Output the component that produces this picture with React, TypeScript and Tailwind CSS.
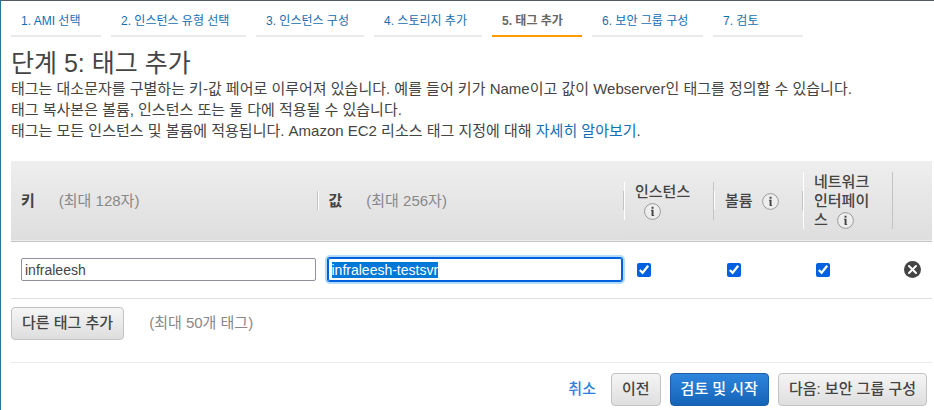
import { useEffect, useRef, useState } from "react";

const steps = [
  { label: "1. AMI 선택", width: "min-w-[90px]" },
  { label: "2. 인스턴스 유형 선택", width: "min-w-[135px]" },
  { label: "3. 인스턴스 구성", width: "min-w-[108px]" },
  { label: "4. 스토리지 추가", width: "min-w-[108px]" },
  { label: "5. 태그 추가", width: "min-w-[90px]" },
  { label: "6. 보안 그룹 구성", width: "min-w-[111px]" },
  { label: "7. 검토", width: "min-w-[90px]" },
];

const currentStep = 4;

const grayButton =
  "h-[33px] rounded-[4px] border border-[#c3c3c3] bg-linear-to-b from-[#f5f5f5] to-[#dedede] px-[10px] text-[15px] font-medium whitespace-nowrap text-[#444] hover:to-[#d0d0d0]";

function InfoIcon() {
  return (
    <svg
      className="ml-[9px] inline-block h-[17px] w-[17px] align-[-4px]"
      viewBox="0 0 17 17"
      fill="none"
      aria-hidden="true"
    >
      <circle cx="8.5" cy="8.5" r="7.9" fill="#eee" stroke="#999" />
      <path d="M7.6 3.8h1.9v1.9H7.6zM7 6.8h2.5v5.4h.7v.9H7.6V7.7H7z" fill="#444" />
    </svg>
  );
}

function RemoveIcon() {
  return (
    <svg className="block h-[17px] w-[17px]" viewBox="0 0 17 17" fill="none" aria-hidden="true">
      <circle cx="8.5" cy="8.5" r="8.5" fill="#444" />
      <path
        d="M5 5l7 7M12 5l-7 7"
        stroke="#fff"
        strokeWidth="2"
        strokeLinecap="round"
      />
    </svg>
  );
}

function ScopeHeader({ label }: { label: string }) {
  return (
    <th scope="col" className="p-0 text-left align-middle text-[15px] leading-[19px] font-medium">
      <div className="border-r border-l border-r-[#c3c3c3] border-l-white pr-3 pl-[10px]">
        {label}
        <InfoIcon />
      </div>
    </th>
  );
}

export default function App() {
  const valueRef = useRef<HTMLInputElement>(null);
  const [tagKey, setTagKey] = useState("infraleesh");
  const [tagValue, setTagValue] = useState("infraleesh-testsvr");

  useEffect(() => {
    valueRef.current?.focus();
    valueRef.current?.select();
  }, []);

  return (
    <div className="min-h-screen border-t border-l border-t-[#545b64] border-l-[#2a7897] bg-white pl-[10px] font-['Liberation_Sans','Noto_Sans_CJK_KR',sans-serif] text-[#444]">
      {/* Pasos del asistente */}
      <nav className="flex gap-[10px] pt-[10px] text-[12px] leading-[20px]">
        {steps.map((step, i) => (
          <a
            key={step.label}
            href="#"
            className={`border-b-2 px-[10px] pb-1 whitespace-nowrap ${step.width} ${
              i === currentStep
                ? "border-[#f90] font-bold text-[#666]"
                : "border-[#eaeaea] text-[#146eb4]"
            }`}
          >
            {step.label}
          </a>
        ))}
      </nav>

      <h1 className="pt-[11px] text-[25px] leading-[30px]">단계 5: 태그 추가</h1>
      <div className="text-[15px] leading-[21px]">
        <p>
          태그는 대소문자를 구별하는 키-값 페어로 이루어져 있습니다. 예를 들어 키가 Name이고 값이
          Webserver인 태그를 정의할 수 있습니다.
        </p>
        <p>태그 복사본은 볼륨, 인스턴스 또는 둘 다에 적용될 수 있습니다.</p>
        <p>
          태그는 모든 인스턴스 및 볼륨에 적용됩니다. Amazon EC2 리소스 태그 지정에 대해{" "}
          <a href="#" className="text-[#146eb4] hover:underline">
            자세히 알아보기
          </a>
          .
        </p>
      </div>

      <div className="pr-[2px]">
        <table className="mt-5 w-full table-fixed border-collapse">
          <colgroup>
            <col />
            <col />
            <col className="w-[90px]" />
            <col className="w-[89px]" />
            <col className="w-[90px]" />
            <col className="w-[39px]" />
          </colgroup>
          <thead>
            <tr className="h-[80px] border-b border-[#c3c3c3] bg-linear-to-b from-[#eee] to-[#dedede]">
              <th scope="col" className="p-0 text-left text-[15px] leading-[19px]">
                <div className="border-r border-[#c3c3c3] pl-[10px]">
                  키<span className="ml-6 font-normal text-[#888]">(최대 128자)</span>
                </div>
              </th>
              <th scope="col" className="p-0 text-left text-[15px] leading-[19px]">
                <div className="border-r border-l border-r-[#c3c3c3] border-l-white pl-[10px]">
                  값<span className="ml-6 font-normal text-[#888]">(최대 256자)</span>
                </div>
              </th>
              <ScopeHeader label="인스턴스" />
              <ScopeHeader label="볼륨" />
              <ScopeHeader label="네트워크 인터페이스" />
              <td></td>
            </tr>
          </thead>
          <tbody>
            <tr className="h-[57px] border-b border-[#ddd]">
              <td className="pr-[2px] pl-[10px]">
                <input
                  type="text"
                  aria-label="키"
                  value={tagKey}
                  onChange={(e) => setTagKey(e.target.value)}
                  className="block h-[23px] w-full rounded-[2px] border border-[#8f8f9d] px-[3px] text-[14px] leading-4 outline-none"
                />
              </td>
              <td className="pr-[2px] pl-[10px]">
                <input
                  ref={valueRef}
                  type="text"
                  aria-label="값"
                  value={tagValue}
                  onChange={(e) => setTagValue(e.target.value)}
                  className="block h-[23px] w-full rounded-[2px] border border-[#8f8f9d] px-[3px] text-[14px] leading-4 outline-none selection:bg-[#0078d7] selection:text-white focus:border-[#0060df] focus:shadow-[0_0_0_1px_#0060df,0_0_0_3px_#b3dcf8]"
                />
              </td>
              <td className="pl-[13px]">
                <input type="checkbox" defaultChecked aria-label="인스턴스" className="block h-[14px] w-[14px] accent-[#0060df]" />
              </td>
              <td className="pl-[13px]">
                <input type="checkbox" defaultChecked aria-label="볼륨" className="block h-[14px] w-[14px] accent-[#0060df]" />
              </td>
              <td className="pl-[13px]">
                <input type="checkbox" defaultChecked aria-label="네트워크 인터페이스" className="block h-[14px] w-[14px] accent-[#0060df]" />
              </td>
              <td className="pl-[11px]">
                <button type="button" aria-label="태그 제거" className="block cursor-pointer">
                  <RemoveIcon />
                </button>
              </td>
            </tr>
          </tbody>
        </table>

        <div className="flex items-center gap-[25px] pt-2 pb-[22px]">
          <button type="button" className={grayButton}>
            다른 태그 추가
          </button>
          <span className="text-[15px] text-[#888]">(최대 50개 태그)</span>
        </div>

        {/* Acciones */}
        <div className="flex items-center justify-end gap-[9px] border-t border-[#eaeaea] pt-[10px] pr-[5px] pb-1">
          <a href="#" className="mr-[6px] text-[15px] font-medium text-[#2e7fdb]">
            취소
          </a>
          <button type="button" className={grayButton}>
            이전
          </button>
          <button
            type="button"
            className="h-[33px] rounded-[4px] border border-[#1c5fa8] bg-linear-to-b from-[#2e85dc] to-[#1464b8] px-[10px] text-[15px] font-medium whitespace-nowrap text-white hover:to-[#0f559f]"
          >
            검토 및 시작
          </button>
          <button type="button" className={grayButton}>
            다음: 보안 그룹 구성
          </button>
        </div>
      </div>
    </div>
  );
}
